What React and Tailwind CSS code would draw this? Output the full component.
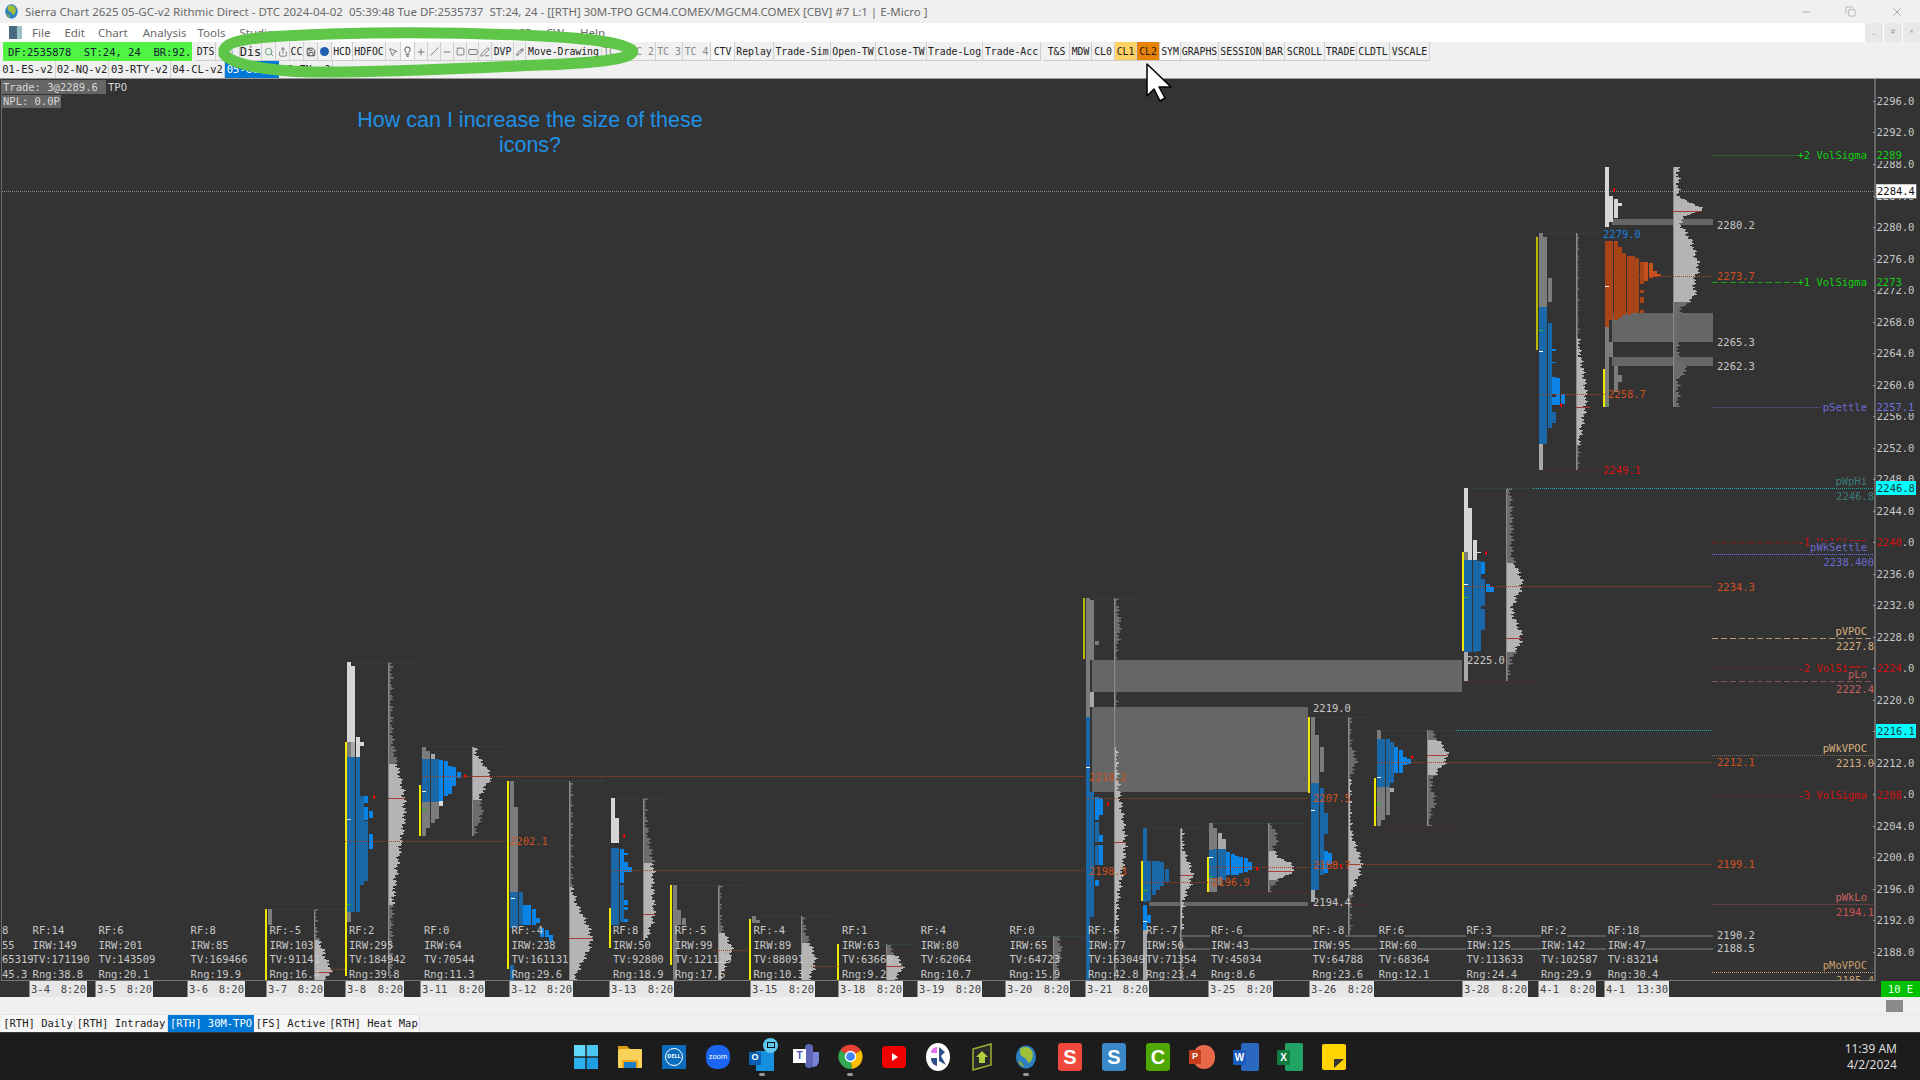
import React from 'react';
import { Search, Share, Save, MousePointer2, Lightbulb, Plus, Slash, Minus, Square, RectangleHorizontal, PenLine, Pencil, Copy, X } from 'lucide-react';

const C = { w: '#d6d6d6', g: '#7c7c7c', l: '#a8a8a8', b: '#1a68a8', B: '#0b84e8', o: '#c8501c', O: '#a84418' };

const profiles = [
  { x: 268, cols: [[[909, 925, 'g']]] },
  { x: 347, cols: [
    [[662, 742, 'w'], [742, 757, 'g'], [757, 912, 'b'], [912, 922, 'g']],
    [[666, 742, 'w'], [742, 757, 'l'], [757, 912, 'b']],
    [[737, 757, 'w'], [757, 912, 'b']],
    [[742, 746, 'w'], [796, 885, 'b']],
    [[796, 803, 'B'], [807, 820, 'B'], [821, 881, 'b']],
    [[811, 818, 'B'], [834, 849, 'B']],
  ] },
  { x: 422, cols: [
    [[747, 759, 'g'], [759, 802, 'b'], [802, 836, 'g']],
    [[751, 759, 'g'], [759, 802, 'b'], [802, 828, 'g']],
    [[754, 759, 'l'], [759, 802, 'b'], [802, 823, 'g']],
    [[759, 802, 'b'], [802, 819, 'g']],
    [[760, 801, 'B'], [801, 806, 'w']],
    [[761, 796, 'B']],
    [[766, 794, 'B']],
    [[767, 786, 'B']],
    [[772, 778, 'B']],
  ] },
  { x: 510, cols: [
    [[781, 892, 'g'], [892, 928, 'b'], [965, 981, 'b']],
    [[807, 892, 'g'], [892, 928, 'b']],
    [[892, 925, 'b']],
    [[905, 925, 'B']],
    [[905, 925, 'B']],
    [[909, 925, 'B']],
    [[918, 923, 'B']],
    [[928, 937, 'B']],
    [[930, 937, 'B']],
    [[935, 942, 'B']],
  ] },
  { x: 611, cols: [
    [[798, 843, 'w'], [848, 925, 'b']],
    [[818, 843, 'w'], [848, 925, 'b']],
    [[849, 883, 'B'], [885, 922, 'b']],
    [[853, 855, 'B'], [862, 872, 'B'], [900, 905, 'B'], [907, 910, 'B'], [919, 922, 'B']],
    [[867, 872, 'B']],
  ] },
  { x: 673, cols: [[[885, 981, 'g']], [[910, 925, 'g']], [[918, 925, 'g']]] },
  { x: 752, cols: [[[916, 923, 'g']], [[920, 923, 'g']]] },
  { x: 1086, cols: [
    [[598, 717, 'g'], [717, 981, 'b']],
    [[600, 660, 'g'], [692, 707, 'l'], [792, 917, 'b']],
    [[641, 645, 'g'], [797, 820, 'B'], [822, 842, 'b'], [845, 865, 'b'], [880, 886, 'B']],
    [[798, 815, 'B'], [835, 842, 'B'], [845, 865, 'B']],
  ] },
  { x: 1143, cols: [
    [[828, 902, 'b'], [905, 930, 'B'], [930, 981, 'l']],
    [[861, 901, 'b'], [915, 923, 'B']],
    [[861, 895, 'b']],
    [[861, 890, 'b']],
    [[862, 886, 'b']],
    [[869, 882, 'b']],
  ] },
  { x: 1209, cols: [
    [[823, 850, 'g'], [850, 878, 'b'], [878, 892, 'g']],
    [[828, 849, 'g'], [849, 878, 'b'], [878, 892, 'g']],
    [[833, 849, 'l'], [849, 877, 'b'], [877, 885, 'g']],
    [[839, 849, 'l'], [849, 880, 'b']],
    [[852, 875, 'B']],
    [[854, 875, 'B']],
    [[856, 875, 'B']],
    [[857, 873, 'B']],
    [[858, 872, 'B']],
    [[862, 870, 'B']],
  ] },
  { x: 1311, cols: [
    [[717, 783, 'g'], [783, 890, 'b'], [890, 902, 'l']],
    [[735, 783, 'g'], [783, 890, 'b']],
    [[747, 772, 'g'], [788, 875, 'b']],
    [[813, 834, 'b'], [851, 873, 'B']],
    [[853, 864, 'B']],
  ] },
  { x: 1377, cols: [
    [[730, 739, 'g'], [739, 787, 'b'], [787, 826, 'g']],
    [[739, 787, 'b'], [787, 820, 'g']],
    [[739, 787, 'b'], [787, 815, 'g']],
    [[742, 783, 'b'], [788, 792, 'l']],
    [[747, 773, 'B']],
    [[750, 773, 'B']],
    [[757, 765, 'B']],
    [[759, 764, 'B']],
  ] },
  { x: 1464, cols: [
    [[488, 552, 'w'], [552, 560, 'g'], [560, 652, 'b'], [652, 681, 'l']],
    [[508, 560, 'w'], [560, 652, 'b']],
    [[540, 560, 'w'], [560, 652, 'b']],
    [[552, 553, 'w'], [561, 651, 'b']],
    [[562, 574, 'B'], [579, 606, 'b'], [609, 630, 'b']],
    [[584, 592, 'B']],
    [[587, 592, 'B']],
  ] },
  { x: 1539, cols: [
    [[233, 307, 'g'], [307, 444, 'b'], [444, 470, 'l']],
    [[237, 307, 'g'], [307, 444, 'b']],
    [[278, 302, 'g'], [323, 428, 'b']],
    [[349, 351, 'B'], [362, 363, 'B'], [377, 394, 'B'], [397, 405, 'B'], [412, 423, 'b']],
    [[378, 405, 'B']],
    [[394, 404, 'B']],
  ] },
  { x: 1605, cols: [
    [[167, 227, 'w'], [241, 327, 'O'], [327, 407, 'g']],
    [[196, 222, 'w'], [241, 320, 'O'], [342, 357, 'g']],
    [[199, 218, 'w'], [241, 320, 'O'], [366, 392, 'g']],
    [[203, 206, 'w'], [247, 318, 'O'], [375, 382, 'g']],
    [[253, 315, 'O']],
    [[256, 315, 'O']],
    [[256, 313, 'O']],
    [[258, 313, 'O']],
    [[262, 284, 'O'], [290, 293, 'O'], [297, 303, 'O'], [310, 313, 'O']],
    [[262, 281, 'o']],
    [[263, 278, 'o']],
    [[271, 277, 'o']],
    [[274, 276, 'o']],
  ] },
];

const BRIGHT = '#b4b4b4';
const DIM = '#6c6c6c';
const vols = [
  { x: 313.5, top: 909, bot: 981, dim: [[909, 940]], peaks: [[972, 12, 8], [955, 8, 12]], poc: [972, 17] },
  { x: 388, top: 662, bot: 976, dim: [[662, 764], [905, 976]], peaks: [[798, 9, 30], [840, 7, 40]], poc: [798, 17], base: 3 },
  { x: 472, top: 747, bot: 836, dim: [[800, 836]], peaks: [[776, 16, 12], [812, 8, 10]], poc: [776, 18] },
  { x: 569, top: 781, bot: 981, dim: [[781, 887]], peaks: [[938, 20, 22]], poc: [938, 24] },
  { x: 643, top: 798, bot: 940, dim: [[798, 863]], peaks: [[870, 8, 25], [914, 7, 15]], poc: [914, 12] },
  { x: 718, top: 885, bot: 981, dim: [[885, 933]], peaks: [[950, 12, 12]] },
  { x: 801, top: 916, bot: 981, dim: [[916, 943]], peaks: [[960, 12, 16]] },
  { x: 886, top: 944, bot: 981, dim: [[944, 955]], peaks: [[966, 14, 10]], poc: [966, 16] },
  { x: 1053, top: 936, bot: 981, dim: [[936, 981]], peaks: [[950, 6, 12]] },
  { x: 1114, top: 598, bot: 981, dim: [[598, 747], [935, 981]], peaks: [[842, 9, 35], [625, 4, 12]], poc: [842, 12], base: 2 },
  { x: 1180, top: 828, bot: 981, dim: [[930, 981]], peaks: [[875, 10, 14]], poc: [875, 13], base: 2 },
  { x: 1268, top: 823, bot: 892, dim: [[823, 851], [880, 892]], peaks: [[868, 24, 8], [838, 7, 8]], poc: [871, 25] },
  { x: 1348, top: 717, bot: 935, dim: [[717, 779], [895, 935]], peaks: [[864, 11, 16], [760, 6, 8]], poc: [864, 12], base: 2 },
  { x: 1427, top: 730, bot: 826, dim: [[730, 740], [775, 826]], peaks: [[755, 18, 13], [800, 6, 8]], poc: [755, 20] },
  { x: 1506, top: 488, bot: 681, dim: [[488, 563], [652, 681]], peaks: [[583, 13, 14], [636, 13, 14], [525, 4, 30]], poc: [638, 16], base: 2 },
  { x: 1576, top: 233, bot: 470, dim: [[233, 338], [445, 470]], peaks: [[395, 9, 28]], poc: [407, 14], base: 1 },
  { x: 1673, top: 167, bot: 407, dim: [[302, 407]], peaks: [[208, 24, 5], [267, 20, 16], [240, 8, 10], [295, 12, 8], [369, 9, 4]], poc: [211, 28], base: 5 },
];

const widthAt = (v, y) => {
  const jitter = Math.sin(y * 1.73 + v.x) * 1.4 + Math.sin(y * 0.61 + v.x * 0.3) * 1.3;
  let w = (v.base ?? 2) + jitter;
  v.peaks.forEach(([py, a, s]) => { w += a * Math.exp(-((y - py) ** 2) / (2 * s * s)); });
  return Math.max(1.5, w);
};

const volPath = (v, a, b) => {
  let d = `M${v.x} ${a}`;
  for (let y = a; y < b; y += 1) d += `H${(v.x + widthAt(v, y)).toFixed(1)}V${y + 1}`;
  return `${d}H${v.x}Z`;
};

const volBands = (v) => {
  const out = [];
  let y = v.top;
  v.dim.forEach(([a, b]) => {
    if (a > y) out.push([y, a, BRIGHT]);
    out.push([a, b, DIM]);
    y = b;
  });
  if (y < v.bot) out.push([y, v.bot, BRIGHT]);
  return out;
};

const dotted = [
  [272, 909, 345, '#2e4a5e'], [352, 662, 418, '#2e4a5e'], [430, 746, 505, '#2e4a5e'], [518, 781, 605, '#2e4a5e'],
  [615, 798, 668, '#2e4a5e'], [680, 885, 745, '#2e4a5e'], [760, 916, 835, '#2e4a5e'], [845, 944, 915, '#2e4a5e'],
  [1010, 936, 1085, '#2e4a5e'], [1095, 598, 1138, '#2e4a5e'], [1150, 828, 1205, '#2e4a5e'], [1215, 823, 1305, '#2e4a5e'],
  [1315, 717, 1372, '#2e4a5e'], [1380, 730, 1460, '#2e4a5e'], [1470, 488, 1530, '#2e4a5e'], [1545, 233, 1600, '#2e4a5e'],
  [345, 841, 507, '#a8401c'], [422, 776.5, 1085, '#a8401c'], [611, 870.5, 1085, '#a8401c'], [1086, 798, 1308, '#a8401c'],
  [1143, 882, 1215, '#a8401c'], [1210, 867, 1310, '#a8401c'], [1311, 864, 1712, '#a8401c'], [1377, 762, 1712, '#a8401c'],
  [1464, 586.5, 1712, '#a8401c'], [1539, 394, 1606, '#a8401c'], [1605, 276, 1712, '#a8401c'], [713, 950, 748, '#a8401c'],
  [811, 966, 838, '#a8401c'], [897, 980, 1003, '#a8401c'], [330, 969, 345, '#a8401c'],
  [1540, 470, 1600, '#5a2a2a'], [1464, 681, 1535, '#5a2a2a'], [1310, 904, 1372, '#5a2a2a'], [1380, 826, 1460, '#5a2a2a'], [1220, 892, 1310, '#5a2a2a'],
  [1532, 488.5, 1874, '#1fa8a8'], [1456, 730.5, 1712, '#1fa8a8'],
  [1712, 155, 1797, '#1a8a1a'], [1712, 407, 1822, '#5555aa'], [1712, 668.5, 1797, '#8a1a1a'], [1712, 795, 1797, '#8a1a1a'],
  [1712, 554.5, 1874, '#7070ff'], [1712, 755.5, 1874, '#7a6e60'], [1712, 904.5, 1874, '#8a4a4a'], [1712, 972.5, 1874, '#c8a070'],
];

const dashed = [
  [1712, 282, 1797, '#1aa01a'], [1712, 542, 1797, '#8a1a1a'], [1712, 638.5, 1874, '#b09878'], [1712, 681.5, 1874, '#8a5555'],
];

const axis = [];
for (let p = 2296; p >= 2188; p -= 4) axis.push(p);
const priceY = (p) => 510.7 + (2244 - p) * 7.88;

const grayLines = [
  [936, [[1179, 1210], [1243, 1312], [1345, 1377], [1404, 1466], [1492, 1541], [1567, 1606], [1640, 1713]]],
  [949, [[1183, 1210], [1250, 1312], [1351, 1377], [1417, 1466], [1511, 1541], [1586, 1606], [1645, 1713]]],
];

const stats = [
  [32.6, 'RF:14', 'IRW:149', 'TV:171190', 'Rng:38.8'],
  [98.4, 'RF:6', 'IRW:201', 'TV:143509', 'Rng:20.1'],
  [190.6, 'RF:8', 'IRW:85', 'TV:169466', 'Rng:19.9'],
  [269.4, 'RF:-5', 'IRW:103', 'TV:91141', 'Rng:16.4'],
  [349, 'RF:2', 'IRW:295', 'TV:184942', 'Rng:39.8'],
  [424, 'RF:0', 'IRW:64', 'TV:70544', 'Rng:11.3'],
  [511.4, 'RF:-4', 'IRW:238', 'TV:161131', 'Rng:29.6'],
  [613, 'RF:8', 'IRW:50', 'TV:92800', 'Rng:18.9'],
  [674.7, 'RF:-5', 'IRW:99', 'TV:121129', 'Rng:17.6'],
  [753.5, 'RF:-4', 'IRW:89', 'TV:88091', 'Rng:10.3'],
  [842, 'RF:1', 'IRW:63', 'TV:63660', 'Rng:9.2'],
  [920.8, 'RF:4', 'IRW:80', 'TV:62064', 'Rng:10.7'],
  [1009.4, 'RF:0', 'IRW:65', 'TV:64723', 'Rng:15.9'],
  [1088, 'RF:-6', 'IRW:77', 'TV:163049', 'Rng:42.8'],
  [1146, 'RF:-7', 'IRW:50', 'TV:71354', 'Rng:23.4'],
  [1211, 'RF:-6', 'IRW:43', 'TV:45034', 'Rng:8.6'],
  [1312.6, 'RF:-8', 'IRW:95', 'TV:64788', 'Rng:23.6'],
  [1378.8, 'RF:6', 'IRW:60', 'TV:68364', 'Rng:12.1'],
  [1466.5, 'RF:3', 'IRW:125', 'TV:113633', 'Rng:24.4'],
  [1541, 'RF:2', 'IRW:142', 'TV:102587', 'Rng:29.9'],
  [1607.8, 'RF:18', 'IRW:47', 'TV:83214', 'Rng:30.4'],
];

const Label = ({ x, y, fill = '#c8c8c8', end, bg, children }) => {
  const w = String(children).length * 6.32;
  return (
    <g>
      {bg && <rect x={end ? x - w : x} y={y - 6} width={w} height={12} fill="#333333" />}
      <text x={x} y={y + 4} fill={fill} textAnchor={end ? 'end' : 'start'}>{children}</text>
    </g>
  );
};

const Tick = ({ x, y, c = '#ff0000' }) => <polygon points={`${x},${y} ${x + 3},${y - 3} ${x + 3},${y + 3}`} fill={c} />;

const Chart = () => (
  <svg className="block w-[1920px] h-[902px] font-['DejaVu_Sans_Mono',monospace] text-[10.5px]" viewBox="0 79 1920 902" shapeRendering="crispEdges">
    <rect x="1" y="79" width="1" height="902" fill="#6a6a6a" />
    <line x1="2" y1="191.5" x2="1874" y2="191.5" stroke="#8c8c8c" strokeDasharray="1 1" />

    {/* single print boxes */}
    <rect x="1092" y="660" width="370" height="32" fill="#666666" />
    <rect x="1092" y="707" width="216" height="85" fill="#666666" />
    <rect x="1149" y="902" width="159" height="4" fill="#666666" />
    <rect x="1612" y="219" width="101" height="6" fill="#666666" />
    <rect x="1612" y="313" width="101" height="29" fill="#666666" />
    <rect x="1612" y="357" width="101" height="9" fill="#666666" />
    {grayLines.map(([y, segs]) => segs.map(([a, b]) => <rect key={`${y}-${a}`} x={a} y={y - 1} width={b - a} height="2" fill="#5c5c5c" />))}

    {vols.map((v) => (
      <g key={v.x}>
        {volBands(v).map(([a, b, c]) => <path key={a} d={volPath(v, a, b)} fill={c} />)}
        <rect x={v.x} y={v.top} width="1" height={v.bot - v.top} fill="#8a8a8a" />
        {v.poc && <rect x={v.x} y={v.poc[0]} width={v.poc[1]} height="1" fill="#a83a3a" />}
      </g>
    ))}

    {profiles.map((p) => p.cols.map((segs, i) => segs.map(([a, b, c]) => (
      <rect key={`${p.x}-${i}-${a}`} x={p.x + i * 4.35} y={a} width="4" height={b - a} fill={C[c]} />
    ))))}

    {/* initial balance bars */}
    {[[265, 909, 981], [345, 742, 976], [419, 785, 836], [507, 781, 969], [609, 908, 948], [670, 885, 965], [749, 919, 981], [837, 944, 981], [1141, 861, 901], [1207, 857, 892], [1308, 717, 793], [1374, 778, 826], [1462, 552, 651], [1603, 369, 407]].map(([x, a, b]) => (
      <rect key={x} x={x} y={a} width="1.5" height={b - a} fill="#f0e800" />
    ))}
    <rect x="1083" y="598" width="2" height="61" fill="#b8b800" />
    <rect x="1536" y="237" width="2" height="113" fill="#b8b800" />

    {/* dashes on the profiles */}
    {[[347, 819, '#d0d0d0'], [347, 904, '#20b020'], [422, 791, '#ffffff'], [422, 809, '#20b020'], [511, 898, '#ffffff'], [1086, 767, '#ffffff'], [1143, 921, '#ffffff'], [1143, 890, '#20c020'], [1209, 857, '#ffffff'], [1209, 876, '#20c020'], [1311, 810, '#ffffff'], [1377, 777, '#ffffff'], [1377, 803, '#20c020'], [1464, 584, '#ffffff'], [1464, 597, '#20c020'], [1539, 351, '#ffffff'], [1539, 330, '#20c020'], [1605, 286, '#ffffff'], [1605, 404, '#20c020']].map(([x, y, c]) => (
      <rect key={`${x}-${y}`} x={x} y={y} width="4" height="1" fill={c} />
    ))}

    {[[372, 797], [463, 776], [622, 836], [1106, 804], [1255, 869], [1410, 757], [1484, 553], [1559, 405], [1612, 190], [1339, 866]].map(([x, y]) => <Tick key={x} x={x} y={y} />)}

    {dotted.map(([a, y, b, c]) => <line key={`${a}-${y}`} x1={a} y1={y} x2={b} y2={y} stroke={c} strokeDasharray="1 1" />)}
    {dashed.map(([a, y, b, c]) => <line key={`${a}-${y}`} x1={a} y1={y} x2={b} y2={y} stroke={c} strokeDasharray="6 3" />)}
    <rect x="1874" y="79" width="2" height="902" fill="#666666" />
    <rect x="1" y="980" width="1875" height="1" fill="#777777" />

    {/* price scale */}
    {axis.map((p) => (
      <g key={p}>
        <rect x="1873" y={Math.round(priceY(p))} width="2" height="1" fill="#999999" />
        <Label x={1876.5} y={priceY(p)}>{`${p}.0`}</Label>
      </g>
    ))}
    <Label x={1876.5} y={155} fill="#10d010" bg>2289</Label>
    <Label x={1876.5} y={282} fill="#10d010" bg>2273</Label>
    <Label x={1876.5} y={407} fill="#7272e0" bg>2257.1</Label>
    <Label x={1876.5} y={542} fill="#d01010" bg>2240</Label>
    <Label x={1876.5} y={668} fill="#d01010" bg>2224</Label>
    <Label x={1876.5} y={795} fill="#d01010" bg>2208</Label>
    <rect x="1876" y="184" width="40" height="14" fill="#ffffff" stroke="#999999" strokeWidth="0.5" />
    <Label x={1877} y={191} fill="#111111">2284.4</Label>
    <rect x="1876" y="481" width="40" height="14" fill="#00ffff" />
    <Label x={1877} y={488} fill="#1a3a3a">2246.8</Label>
    <rect x="1876" y="724" width="40" height="14" fill="#00ffff" />
    <Label x={1877} y={731} fill="#1a3a3a">2216.1</Label>

    {/* study names */}
    <Label x={1867} y={155} fill="#10d010" end>+2 VolSigma</Label>
    <Label x={1867} y={282} fill="#10d010" end>+1 VolSigma</Label>
    <Label x={1867} y={407} fill="#6a6ad0" end>pSettle</Label>
    <Label x={1867} y={481} fill="#3c7a78" end>pWpHi</Label>
    <Label x={1874} y={496} fill="#3c7a78" end>2246.8</Label>
    <Label x={1867} y={542} fill="#d01010" end>-1 VolSigma</Label>
    <Label x={1867} y={547} fill="#6a6ad0" end bg>pWkSettle</Label>
    <Label x={1874} y={562} fill="#6a6ad0" end>2238.400</Label>
    <Label x={1867} y={631} fill="#d8b080" end>pVPOC</Label>
    <Label x={1874} y={646} fill="#d8b080" end>2227.8</Label>
    <Label x={1867} y={668} fill="#d01010" end>-2 VolSigma</Label>
    <Label x={1867} y={674} fill="#c86060" end bg>pLo</Label>
    <Label x={1874} y={689} fill="#c86060" end>2222.4</Label>
    <Label x={1867} y={748} fill="#d8b080" end>pWkVPOC</Label>
    <Label x={1874} y={763} fill="#d8b080" end>2213.0</Label>
    <Label x={1867} y={795} fill="#d01010" end>-3 VolSigma</Label>
    <Label x={1867} y={897} fill="#c86060" end>pWkLo</Label>
    <Label x={1874} y={912} fill="#d05050" end>2194.1</Label>
    <Label x={1867} y={965} fill="#c8a070" end>pMoVPOC</Label>
    <Label x={1874} y={980} fill="#c8a070" end>2185.4</Label>

    {/* level labels */}
    {[['2280.2', 225], ['2265.3', 342], ['2262.3', 366], ['2190.2', 935], ['2188.5', 948]].map(([t, y]) => <Label key={t} x={1717} y={y}>{t}</Label>)}
    {[['2219.0', 1313, 708], ['2194.4', 1313, 902], ['2225.0', 1467, 660]].map(([t, x, y]) => <Label key={t} x={x} y={y}>{t}</Label>)}
    {[['2273.7', 1717, 276], ['2234.3', 1717, 586.5], ['2212.1', 1717, 762], ['2199.1', 1717, 864], ['2258.7', 1608, 394], ['2210.2', 1089, 777], ['2198.3', 1089, 871], ['2202.1', 510, 841], ['2196.9', 1212, 882], ['2207.5', 1313, 798], ['2188.7', 1313, 865]].map(([t, x, y]) => (
      <Label key={t} x={x} y={y} fill="#d0501e">{t}</Label>
    ))}
    <Label x={1603} y={234} fill="#1480e0">2279.0</Label>
    <Label x={1603} y={470} fill="#d81010">2249.1</Label>

    {/* session stats */}
    {['8', '55', '65319', '45.3'].map((t, i) => <Label key={t} x={2} y={930 + i * 14.5}>{t}</Label>)}
    {stats.map(([x, ...rows]) => rows.map((t, i) => <Label key={`${x}-${i}`} x={x} y={930 + i * 14.5}>{t}</Label>))}

    {/* top left readout */}
    <rect x="2" y="80" width="104" height="14" fill="#666666" />
    <Label x={3} y={87} fill="#d8d8d8">Trade: 3@2289.6</Label>
    <Label x={108} y={87} fill="#d8d8d8">TPO</Label>
    <rect x="2" y="95" width="59" height="13" fill="#666666" />
    <Label x={3} y={101} fill="#d8d8d8">NPL: 0.0P</Label>
  </svg>
);

const MONO = "font-['DejaVu_Sans_Mono',monospace]";

const IconBtn = ({ w, children }) => (
  <div className={`${w} h-full pt-px flex items-center justify-center border-r border-b border-[#cfcfcf] text-[#666]`}>{children}</div>
);

const Btn = ({ w, cls = 'text-[#222]', children }) => (
  <div className={`${w} ${cls} h-full pt-px flex items-center justify-center border-r border-b border-[#cfcfcf] whitespace-nowrap overflow-hidden`}>{children}</div>
);

const Toolbar = () => (
  <div className={`${MONO} h-[19px] bg-[#f0f0f0] flex text-[9.8px] leading-none`}>
    <div className="ml-[3px] w-[189px] h-full pt-px bg-[#50f544] text-[#123] text-[10.5px] flex items-center pl-[5px] whitespace-pre">DF:2535878  ST:24, 24  BR:92.</div>
    <div className="w-[4px]" />
    <Btn w="w-[20px]">DTS</Btn>
    <Btn w="w-[24px]" cls="text-[#999]">Sn</Btn>
    <Btn w="w-[22px] text-[12px]">Dis</Btn>
    <IconBtn w="w-[14px]"><Search size={10} color="#5a9a6a" /></IconBtn>
    <IconBtn w="w-[14px]"><Share size={10} /></IconBtn>
    <Btn w="w-[14px]">CC</Btn>
    <IconBtn w="w-[14px]"><Save size={10} color="#333" /></IconBtn>
    <IconBtn w="w-[14px]"><span className="w-[9px] h-[9px] rounded-full bg-[#2060b0]" /></IconBtn>
    <Btn w="w-[21px] bg-[#f8f8f8]">HCD</Btn>
    <Btn w="w-[33px]">HDFOC</Btn>
    <IconBtn w="w-[15px]"><MousePointer2 size={10} /></IconBtn>
    <IconBtn w="w-[14px] bg-[#f8f8f8]"><Lightbulb size={11} color="#333" /></IconBtn>
    <IconBtn w="w-[13px]"><Plus size={10} /></IconBtn>
    <IconBtn w="w-[13px]"><Slash size={9} /></IconBtn>
    <IconBtn w="w-[13px]"><Minus size={10} /></IconBtn>
    <IconBtn w="w-[13px]"><Square size={9} /></IconBtn>
    <IconBtn w="w-[12px]"><RectangleHorizontal size={10} /></IconBtn>
    <IconBtn w="w-[13px]"><PenLine size={10} /></IconBtn>
    <Btn w="w-[22px]">DVP</Btn>
    <IconBtn w="w-[12px]"><Pencil size={8} color="#333" /></IconBtn>
    <Btn w="w-[76px]">Move-Drawing</Btn>
    <Btn w="w-[27px]" cls="text-[#888]">TC 1</Btn>
    <Btn w="w-[27px]" cls="text-[#888]">TC 2</Btn>
    <Btn w="w-[27px]" cls="text-[#888]">TC 3</Btn>
    <Btn w="w-[28px]" cls="text-[#888]">TC 4</Btn>
    <Btn w="w-[24px] bg-[#f8f8f8]">CTV</Btn>
    <Btn w="w-[39px]">Replay</Btn>
    <Btn w="w-[57px]">Trade-Sim</Btn>
    <Btn w="w-[45px]">Open-TW</Btn>
    <Btn w="w-[51px]">Close-TW</Btn>
    <Btn w="w-[56px]">Trade-Log</Btn>
    <Btn w="w-[58px]">Trade-Acc</Btn>
    <div className="w-[3px]" />
    <Btn w="w-[26px]">T&amp;S</Btn>
    <Btn w="w-[22px]">MDW</Btn>
    <Btn w="w-[23px]">CL0</Btn>
    <Btn w="w-[22px] bg-[#ffd264]">CL1</Btn>
    <Btn w="w-[23px] bg-[#e88000]">CL2</Btn>
    <Btn w="w-[21px] bg-[#f8f8f8]">SYM</Btn>
    <Btn w="w-[38px]">GRAPHS</Btn>
    <Btn w="w-[45px]">SESSION</Btn>
    <Btn w="w-[21px]">BAR</Btn>
    <Btn w="w-[40px]">SCROLL</Btn>
    <Btn w="w-[32px]">TRADE</Btn>
    <Btn w="w-[33px]">CLDTL</Btn>
    <Btn w="w-[40px]">VSCALE</Btn>
  </div>
);

const ChartTabs = () => (
  <div className={`${MONO} h-[18px] bg-[#f0f0f0] flex text-[10.5px] leading-none border-b border-[#999]`}>
    {[['01-ES-v2', 'w-[56px]'], ['02-NQ-v2', 'w-[53px]'], ['03-RTY-v2', 'w-[62px]'], ['04-CL-v2', 'w-[54px]']].map(([t, w]) => (
      <div key={t} className={`${w} h-full flex items-center justify-center border-r border-[#d0d0d0] text-[#222]`}>{t}</div>
    ))}
    <div className="w-[54px] h-full flex items-center justify-center bg-[#0078d7] text-white">05-GC-v2</div>
    <div className="w-[54px] h-full flex items-center justify-center border-r border-[#d0d0d0] text-[#222]">06-ZN-v2</div>
  </div>
);

const dates = [
  ['3-4', '8:20', 'ml-[29px] w-[58px]'], ['3-5', '8:20', 'ml-[8px] w-[58px]'], ['3-6', '8:20', 'ml-[34px] w-[58px]'],
  ['3-7', '8:20', 'ml-[21px] w-[58px]'], ['3-8', '8:20', 'ml-[21px] w-[59px]'], ['3-11', '8:20', 'ml-[16px] w-[65px]'],
  ['3-12', '8:20', 'ml-[24px] w-[64px]'], ['3-13', '8:20', 'ml-[36px] w-[65px]'], ['3-15', '8:20', 'ml-[76px] w-[65px]'],
  ['3-18', '8:20', 'ml-[23px] w-[65px]'], ['3-19', '8:20', 'ml-[14px] w-[65px]'], ['3-20', '8:20', 'ml-[23px] w-[65px]'],
  ['3-21', '8:20', 'ml-[15px] w-[64px]'], ['3-25', '8:20', 'ml-[59px] w-[65px]'], ['3-26', '8:20', 'ml-[36px] w-[65px]'],
  ['3-28', '8:20', 'ml-[88px] w-[66px]'], ['4-1', '8:20', 'ml-[10px] w-[58px]'], ['4-1', '13:30', 'ml-[8px] w-[65px]'],
];

const DateBar = () => (
  <div className={`${MONO} h-[16px] bg-[#333] flex items-stretch text-[10.5px] leading-none`}>
    {dates.map(([d, t, cls]) => (
      <div key={d + t} className={`${cls} bg-[#e6e6e6] text-[#444] flex items-center justify-between px-[1px] border-l border-[#888]`}>
        <span>{d}</span>
        <span>{t}</span>
      </div>
    ))}
    <div className="ml-auto w-[39px] bg-[#00c000] text-[#e8ffe8] flex items-center justify-center">10 E</div>
  </div>
);

const SheetTabs = () => (
  <div className={`${MONO} bg-[#f0f0f0] text-[10.5px] leading-none`}>
    <div className="h-[18px] flex items-center justify-end pr-[17px] border-b border-[#e6e6e6]">
      <div className="w-[17px] h-[12px] bg-[#8a8a8a]" />
    </div>
    <div className="h-[17px] flex pl-[2px] text-[#222]">
      <div className="w-[73px] flex items-center justify-center bg-[#f6f6f6] border-r border-[#e0e0e0]">[RTH] Daily</div>
      <div className="w-[93px] flex items-center justify-center bg-[#f6f6f6] border-r border-[#e0e0e0]">[RTH] Intraday</div>
      <div className="w-[86px] flex items-center justify-center bg-[#0078d7] text-white">[RTH] 30M-TPO</div>
      <div className="w-[74px] flex items-center justify-center bg-[#f6f6f6] border-r border-[#e0e0e0]">[FS] Active</div>
      <div className="w-[92px] flex items-center justify-center bg-[#f6f6f6] border-r border-[#e0e0e0]">[RTH] Heat Map</div>
    </div>
  </div>
);

const GlobeIcon = ({ size = 24 }) => (
  <svg width={size} height={size} viewBox="0 0 24 24">
    <ellipse cx="12" cy="12" rx="10" ry="11.5" fill="#2c7fc0" />
    <path d="M7 3c4-2 9-1 11 3 2 5 0 10-3 12-2-1-2-4-4-5-3-1-5-3-5-6 0-2 0-3 1-4z" fill="#9fbf3a" />
    <path d="M4 16c3 0 5 2 6 6-3-1-5-3-6-6z" fill="#8aae34" />
  </svg>
);

const LetterTile = ({ bg, text = 'text-white', children }) => (
  <div className={`w-[24px] h-[28px] rounded-[3px] flex items-center justify-center text-[20px] font-bold font-['Liberation_Sans',sans-serif] ${bg} ${text}`}>{children}</div>
);

const SideLetter = ({ body, tag, children }) => (
  <div className="relative w-[26px] h-[30px] flex items-center justify-end">
    <div className={`w-[18px] h-[28px] rounded-[2px] ${body}`} />
    <div className={`absolute left-0 top-[8px] w-[13px] h-[15px] rounded-[1px] flex items-center justify-center text-[10px] font-bold text-white font-['Liberation_Sans',sans-serif] ${tag}`}>{children}</div>
  </div>
);

const taskbarIcons = [
  ['start', (
    <svg width="24" height="24" viewBox="0 0 24 24">
      <rect width="11.3" height="11.3" fill="#62d8fa" /><rect x="12.7" width="11.3" height="11.3" fill="#4cc6f3" />
      <rect y="12.7" width="11.3" height="11.3" fill="#2fb0ee" /><rect x="12.7" y="12.7" width="11.3" height="11.3" fill="#1f9ee6" />
    </svg>
  )],
  ['files', (
    <svg width="24" height="24" viewBox="0 0 24 24">
      <path d="M0 1h9l3 3H0z" fill="#d99a10" /><rect y="4" width="24" height="19" rx="1" fill="#fad25a" />
      <rect x="4" y="15" width="16" height="8" rx="1" fill="#f0a818" /><rect x="6" y="17" width="12" height="6" fill="#1c80c8" />
    </svg>
  )],
  ['dell', (
    <div className="w-[24px] h-[24px] bg-[#0a6cbc] flex items-center justify-center">
      <div className="w-[18px] h-[18px] rounded-full border border-white flex items-center justify-center text-[5.5px] font-bold text-white">DELL</div>
    </div>
  )],
  ['zoom', (
    <div className="w-[24px] h-[24px] rounded-[10px] bg-[#1a66f0] flex items-center justify-center text-[7.5px] text-white font-['Liberation_Sans',sans-serif]">zoom</div>
  )],
  ['outlook', (
    <div className="relative w-[26px] h-[30px]">
      <div className="absolute right-[1px] bottom-[1px] w-[18px] h-[20px] bg-[#1490df]" />
      <div className="absolute left-0 top-[10px] w-[12px] h-[13px] bg-[#0a5fb0] flex items-center justify-center text-[9px] font-bold text-white font-['Liberation_Sans',sans-serif]">O</div>
      <div className="absolute right-[-3px] top-[-4px] w-[15px] h-[15px] rounded-full bg-[#60c8f0] flex items-center justify-center">
        <div className="w-[8px] h-[6px] border border-[#111]" />
      </div>
    </div>
  )],
  ['teams', (
    <div className="relative w-[26px] h-[26px]">
      <div className="absolute right-0 top-[8px] w-[13px] h-[15px] rounded-b-[6px] bg-[#7b83d4]" />
      <div className="absolute right-[6px] top-0 w-[8px] h-[24px] rounded-[4px] bg-[#5f65b8]" />
      <div className="absolute left-0 top-[5px] w-[13px] h-[14px] bg-white flex items-center justify-center text-[10px] font-bold text-[#4b53bc] font-['Liberation_Sans',sans-serif]">T</div>
    </div>
  )],
  ['chrome', (
    <svg width="25" height="25" viewBox="0 0 24 24">
      <path d="M12 12L2 6a12 12 0 0 1 20 0z" fill="#e94235" /><path d="M12 12L22 6a12 12 0 0 1-9 18z" fill="#fbbc04" />
      <path d="M12 12L13 24A12 12 0 0 1 2 6z" fill="#34a853" /><circle cx="12" cy="12" r="5.5" fill="#fff" /><circle cx="12" cy="12" r="4.2" fill="#4285f4" />
    </svg>
  )],
  ['youtube', (
    <svg width="24" height="24" viewBox="0 0 24 24"><rect y="1" width="24" height="22" rx="4" fill="#f00000" /><path d="M10 8l6 4-6 4z" fill="#fff" /></svg>
  )],
  ['kcircle', (
    <svg width="24" height="28" viewBox="0 0 24 28">
      <ellipse cx="12" cy="14" rx="12" ry="14" fill="#fff" /><path d="M5 10h6V4C7 4 5 7 5 10z" fill="#e870f0" />
      <path d="M5 15h6v8C7 22 5 19 5 15z" fill="#2e4e8a" /><path d="M13 4l6 5-4 4 5 9-7-4z" fill="#2e4e8a" />
    </svg>
  )],
  ['arrow', (
    <svg width="22" height="28" viewBox="0 0 22 28"><path d="M2 6L20 1v21L2 27z" fill="#2a2a2a" stroke="#a0b030" strokeWidth="1.5" /><path d="M11 8l6 6h-3v6H8v-6H5z" fill="#b0d040" /></svg>
  )],
  ['globe', <GlobeIcon />],
  ['snag', <LetterTile bg="bg-[#f0483c]">S</LetterTile>],
  ['snag2', <LetterTile bg="bg-[#3b88c8]">S</LetterTile>],
  ['camtasia', <LetterTile bg="bg-[#4ea800]">C</LetterTile>],
  ['powerpoint', (
    <div className="relative w-[26px] h-[26px] flex items-center justify-end">
      <div className="w-[22px] h-[24px] rounded-full bg-[#e8694a]" />
      <div className="absolute left-0 top-[6px] w-[12px] h-[14px] bg-[#c43e1c] flex items-center justify-center text-[9px] font-bold text-white font-['Liberation_Sans',sans-serif]">P</div>
    </div>
  )],
  ['word', <SideLetter body="bg-[#2b68c0]" tag="bg-[#185abd]">W</SideLetter>],
  ['excel', <SideLetter body="bg-[#21a366]" tag="bg-[#107c41]">X</SideLetter>],
  ['sticky', (
    <svg width="24" height="26" viewBox="0 0 24 26"><rect width="24" height="26" rx="2" fill="#ffd400" /><path d="M12 24V15h10z" fill="#333" /></svg>
  )],
];

const openApps = ['outlook', 'chrome', 'globe'];

const Taskbar = () => (
  <div className="relative h-[48px] bg-[#1c1c1c] border-t border-[#3c3c3c] flex items-center justify-center">
    {taskbarIcons.map(([name, icon]) => (
      <div key={name} className="relative w-[44px] h-full flex items-center justify-center">
        {icon}
        {openApps.includes(name) && <div className="absolute bottom-[4px] w-[6px] h-[3px] rounded-full bg-[#9a9a9a]" />}
      </div>
    ))}
    <div className="absolute right-[23px] top-0 h-full flex flex-col justify-center items-end text-[12px] leading-[16px] text-[#dcdcdc] font-['Noto_Sans',sans-serif]">
      <span>11:39 AM</span>
      <span>4/2/2024</span>
    </div>
  </div>
);

const Annotation = () => (
  <svg className="absolute inset-0 pointer-events-none" width="1920" height="1080" viewBox="0 0 1920 1080">
    <path d="M224 50C228 38 270 36 330 34C400 32 480 33 540 36C580 38 620 41 632 50C638 58 600 63 540 65C470 68 380 73 310 72C270 71 232 65 224 54L224 50" fill="none" stroke="#5fc64a" strokeWidth="11" strokeLinecap="round" strokeLinejoin="round" />
    <path d="M1147 64V96L1154 89L1160 101L1165 98L1159 87L1171 87Z" fill="#ffffff" stroke="#000000" strokeWidth="1.5" strokeLinejoin="round" />
  </svg>
);

export default function App() {
  return (
    <div className="relative w-[1920px] h-[1080px] overflow-hidden flex flex-col bg-[#f0f0f0]">
      <div className="h-[23px] flex items-center pl-[4px] bg-[#f0f0f0]">
        <GlobeIcon size={15} />
        <span className="ml-[6px] text-[11.5px] text-[#6a6a6a] whitespace-pre font-['Noto_Sans',sans-serif]">Sierra Chart 2625 05-GC-v2 Rithmic Direct - DTC 2024-04-02  05:39:48 Tue DF:2535737  ST:24, 24 - [[RTH] 30M-TPO GCM4.COMEX/MGCM4.COMEX [CBV] #7 L:1 | E-Micro ]</span>
        <div className="ml-auto flex items-center text-[#777]">
          <div className="w-[45px] flex justify-center"><Minus size={12} strokeWidth={1} /></div>
          <div className="w-[45px] flex justify-center"><Copy size={11} strokeWidth={1} /></div>
          <div className="w-[47px] flex justify-center"><X size={14} strokeWidth={1} /></div>
        </div>
      </div>

      <div className="h-[19px] bg-white flex items-center text-[11.5px] text-[#6a6a6a] font-['Noto_Sans',sans-serif]">
        <div className="ml-[9px] w-[13px] h-[13px] bg-[#4a6a80] border-r-[5px] border-[#9ac0c8]" />
        <span className="ml-[10px]">File</span>
        <span className="ml-[14px]">Edit</span>
        <span className="ml-[13px]">Chart</span>
        <span className="ml-[15px]">Analysis</span>
        <span className="ml-[11px]">Tools</span>
        <span className="ml-[14px]">Studies</span>
        <span className="ml-[179px]">Window</span>
        <span className="ml-[17px]">SP</span>
        <span className="ml-[14px]">CW</span>
        <span className="ml-[16px]">Help</span>
        <div className="ml-auto h-full flex">
          {['w-[19px]', 'w-[19px]', 'w-[18px]'].map((w, i) => (
            <div key={i} className={`${w} h-full bg-[#e8e8e8] border-l border-white flex items-center justify-center text-[7px] text-[#999]`}>{['_', '#', '×'][i]}</div>
          ))}
        </div>
      </div>

      <Toolbar />
      <ChartTabs />

      <div className="relative h-[902px] bg-[#333333]">
        <Chart />
        <div className="absolute left-[340px] top-[29px] w-[380px] text-center text-[21.5px] leading-[24.5px] text-[#2090e4] font-['Liberation_Sans',sans-serif]">
          How can I increase the size of these icons?
        </div>
      </div>

      <DateBar />
      <SheetTabs />
      <Taskbar />
      <Annotation />
    </div>
  );
}
